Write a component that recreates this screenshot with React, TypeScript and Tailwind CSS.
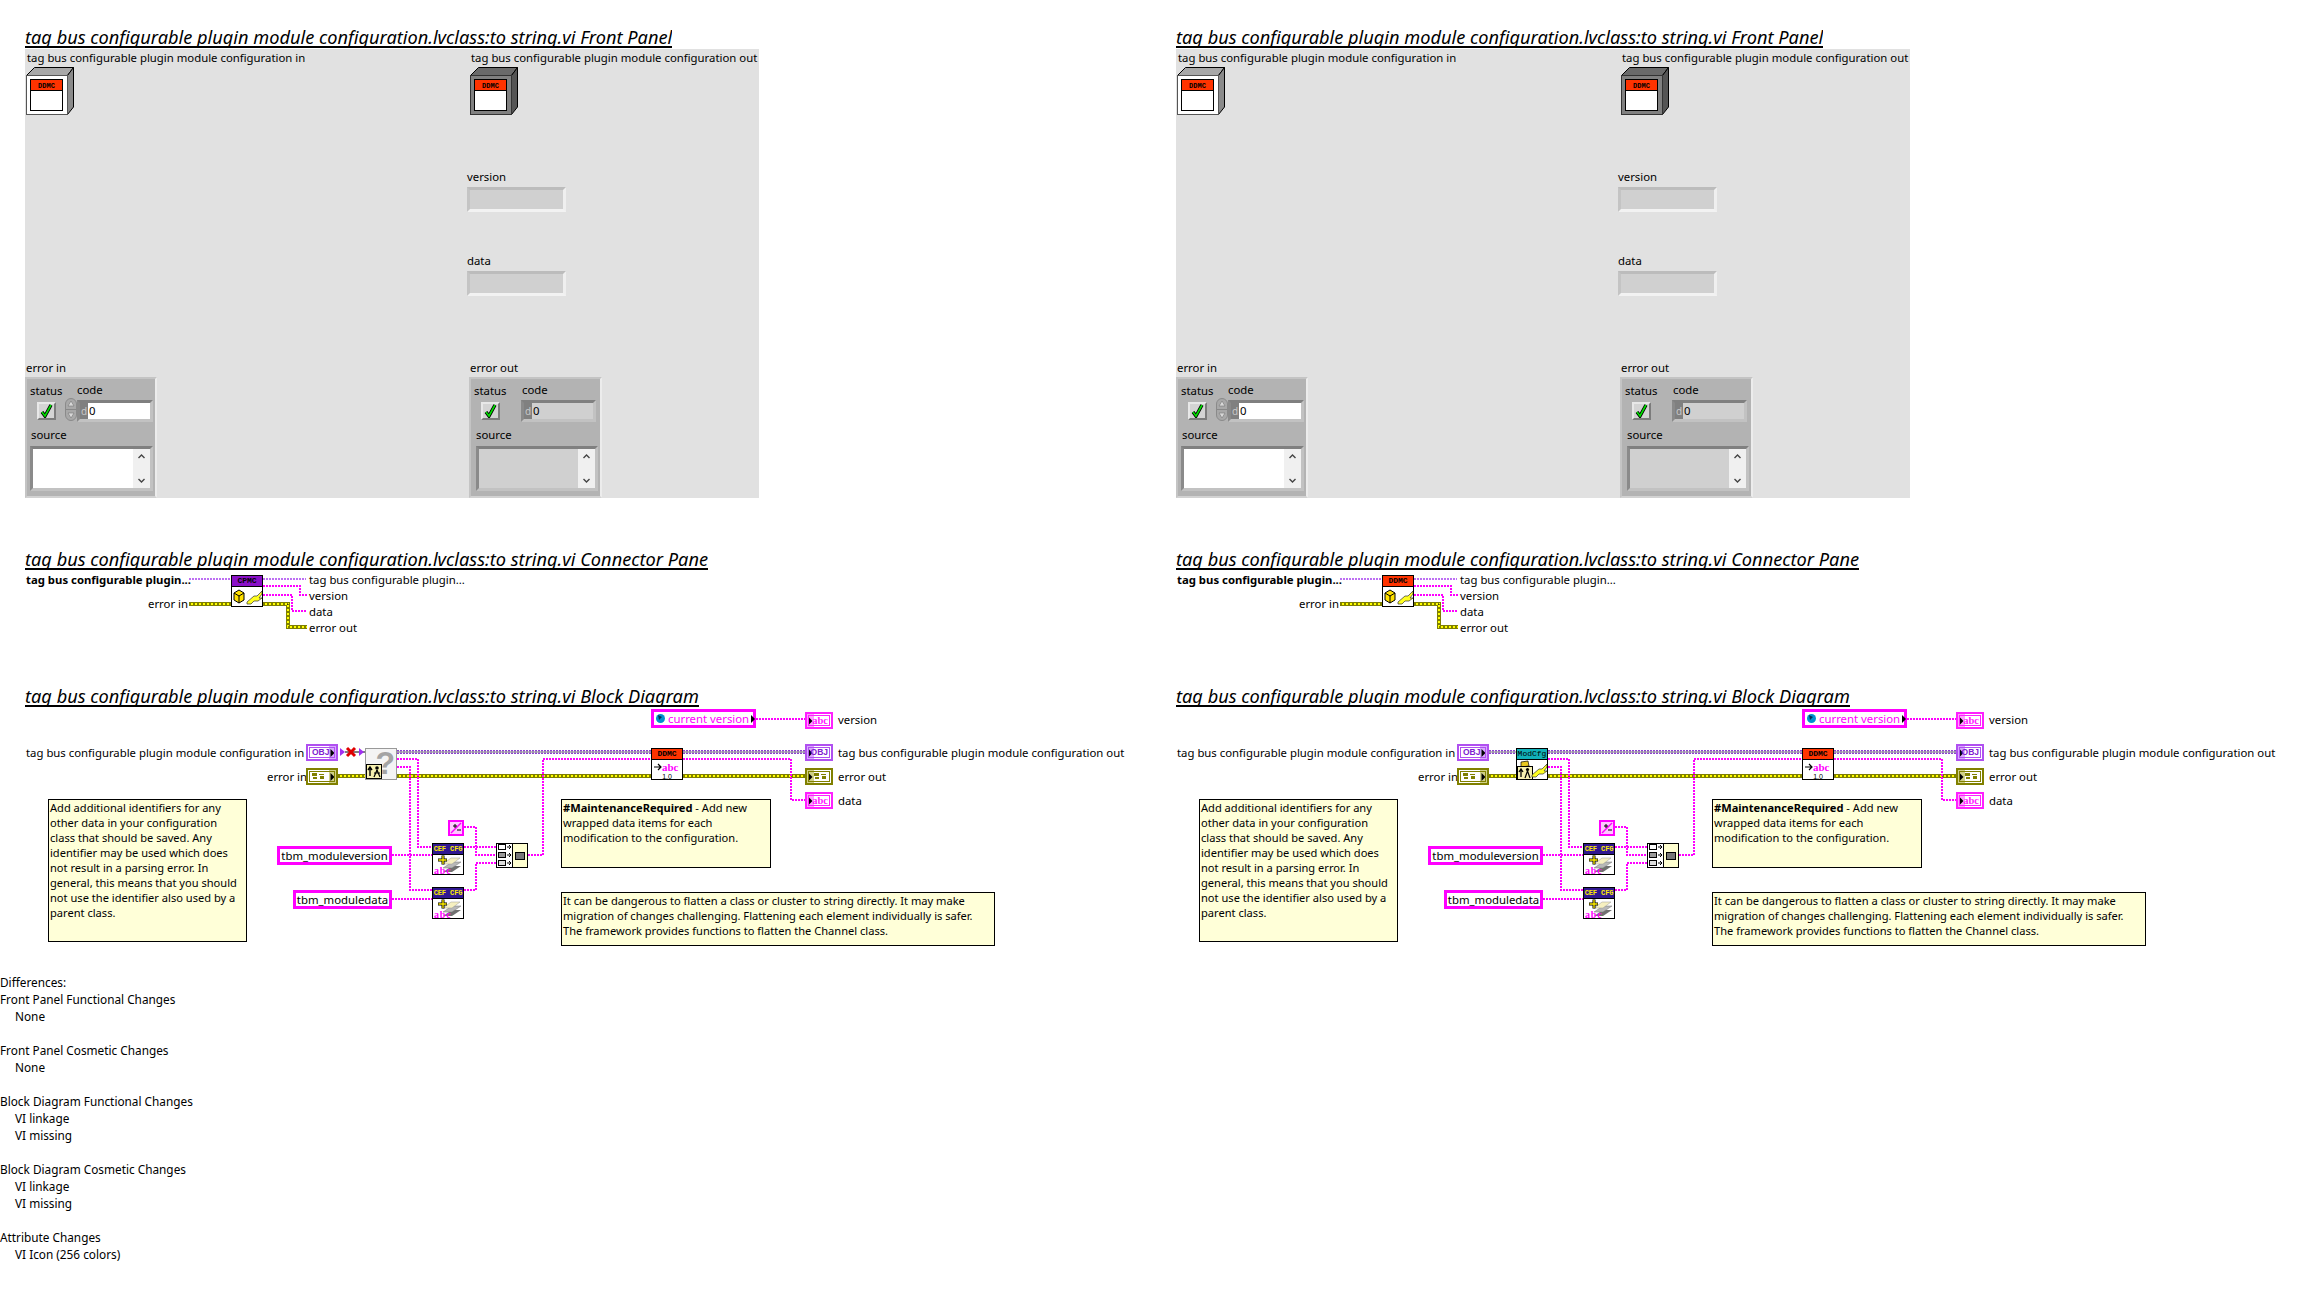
import type { ReactNode } from "react";

type Variant = "old" | "new";

function Title({ children, className = "" }: { children: ReactNode; className?: string }) {
  return (
    <h2 className={`ml-[25px] w-fit h-[24px] overflow-hidden border-b-2 border-black text-[18.2px] leading-[26px] italic font-normal text-black whitespace-nowrap ${className}`}>
      {children}
    </h2>
  );
}

function Label({ className = "", children }: { className?: string; children: ReactNode }) {
  return <span className={`absolute text-[11.35px] leading-[14px] text-black whitespace-nowrap ${className}`}>{children}</span>;
}

function Caption({ className = "", children }: { className?: string; children: ReactNode }) {
  return <span className={`block text-[11.35px] leading-[14px] text-black whitespace-nowrap ${className}`}>{children}</span>;
}

function ClassCube({ indicator, className }: { indicator?: boolean; className: string }) {
  return (
    <svg className={`absolute ${className}`} width="48" height="48" viewBox="0 0 48 48">
      <polygon points="0.5,8.5 8.5,0.5 47.5,0.5 41.5,8.5" fill={indicator ? "#6a6a6a" : "#a8a8a8"} stroke="#000" />
      <polygon points="41.5,8.5 47.5,0.5 47.5,40 41.5,47.5" fill={indicator ? "#555" : "#8a8a8a"} stroke="#000" />
      <rect x="0.5" y="8.5" width="41" height="39" fill={indicator ? "#808080" : "#fff"} stroke={indicator ? "#333" : "#555"} />
      <rect x="4.5" y="12.5" width="32" height="31" fill="#fff" stroke="#000" />
      <rect x="5" y="13" width="31" height="10" fill="#ff3300" />
      <line x1="5" y1="23.5" x2="36" y2="23.5" stroke="#000" />
      <text x="20.5" y="21" textAnchor="middle" fontSize="7" fontWeight="700" fontFamily="'Liberation Mono', monospace" fill="#000">DDMC</text>
    </svg>
  );
}

function ReadoutBox({ className }: { className: string }) {
  return <div className={`absolute w-[99px] h-[25px] bg-[#d0d0d0] border-[3px] border-t-[#bcbcbc] border-l-[#c4c4c4] border-r-[#efefef] border-b-[#f2f2f2] ${className}`} />;
}

function ErrorCheck() {
  return (
    <div className="ml-[7px] mt-[4px] w-[19px] h-[18px] bg-[#d4d4d4] border-2 border-t-[#e8e8e8] border-l-[#e8e8e8] border-r-[#7c7c7c] border-b-[#7c7c7c]">
      <svg width="15" height="14" viewBox="0 0 15 14">
        <path d="M3 8 L6 12 L12 1" fill="none" stroke="#000" strokeWidth="3.4" />
        <path d="M3 8 L6 12 L12 1" fill="none" stroke="#00e000" strokeWidth="1.6" />
      </svg>
    </div>
  );
}

function ScrollArrows() {
  return (
    <div className="ml-auto h-full w-[17px] bg-[#f0f0f0] flex flex-col items-center justify-between py-[5px]">
      <svg width="7" height="5" viewBox="0 0 7 5"><path d="M0.5 4 L3.5 1 L6.5 4" fill="none" stroke="#444" strokeWidth="1.4" /></svg>
      <svg width="7" height="5" viewBox="0 0 7 5"><path d="M0.5 1 L3.5 4 L6.5 1" fill="none" stroke="#444" strokeWidth="1.4" /></svg>
    </div>
  );
}

function ErrorCluster({ indicator }: { indicator?: boolean }) {
  return (
    <div className={`absolute top-[328px] h-[121px] pt-[4px] pl-[3px] bg-[#b3b3b3] border-2 border-t-[#c4c4c4] border-l-[#c4c4c4] border-r-[#ececec] border-b-[#d2d2d2] ${indicator ? "left-[444px] w-[133px]" : "left-0 w-[132px]"}`}>
      <div className="flex h-[41px]">
        <div className="w-[35px]">
          <Caption className="mt-px">status</Caption>
          <ErrorCheck />
        </div>
        <div className="w-[12px] pt-[15px]">
          {!indicator && (
            <svg className="block" width="12" height="23" viewBox="0 0 12 23">
              <rect x="0.5" y="0.5" width="11" height="22" rx="5.5" fill="#a8a8a8" stroke="#8a8a8a" />
              <path d="M6 3 L9 8 L3 8 Z" fill="#d8d8d8" stroke="#777" strokeWidth="0.6" />
              <path d="M6 20 L9 15 L3 15 Z" fill="#d8d8d8" stroke="#777" strokeWidth="0.6" />
              <line x1="1" y1="11.5" x2="11" y2="11.5" stroke="#888" />
            </svg>
          )}
        </div>
        <div>
          <Caption className={indicator ? "pl-px" : ""}>code</Caption>
          <div className={`mt-[3px] h-[22px] border-[3px] border-t-[#808080] border-l-[#8a8a8a] border-r-[#c2c2c2] border-b-[#c2c2c2] flex ${indicator ? "w-[75px] bg-[#d0d0d0]" : "w-[76px] bg-white"}`}>
            <span className="w-[8px] bg-[#808080] text-[10px] leading-[16px] text-[#c8c8c8] text-center shrink-0">d</span>
            <span className="text-[11.35px] leading-[16px] text-black pl-px">0</span>
          </div>
        </div>
      </div>
      <Caption className={`mt-[4px] ${indicator ? "pl-[2px]" : "pl-px"}`}>source</Caption>
      <div className={`mt-[4px] h-[45px] border-[3px] border-t-[#808080] border-l-[#8a8a8a] border-r-[#c2c2c2] border-b-[#c2c2c2] ${indicator ? "ml-[2px] w-[122px] bg-[#d0d0d0]" : "w-[123px] bg-white"}`}>
        <ScrollArrows />
      </div>
    </div>
  );
}

function FrontPanel() {
  return (
    <div className="relative ml-[25px] mt-px w-[734px] h-[449px] bg-[#e1e1e1]">
      <Label className="left-[2px] top-[2px]">tag bus configurable plugin module configuration in</Label>
      <ClassCube className="left-px top-[18px]" />
      <Label className="left-[446px] top-[2px]">tag bus configurable plugin module configuration out</Label>
      <ClassCube indicator className="left-[445px] top-[18px]" />
      <Label className="left-[442px] top-[121px]">version</Label>
      <ReadoutBox className="left-[442px] top-[138px]" />
      <Label className="left-[442px] top-[205px]">data</Label>
      <ReadoutBox className="left-[442px] top-[222px]" />
      <Label className="left-px top-[312px]">error in</Label>
      <ErrorCluster />
      <Label className="left-[445px] top-[312px]">error out</Label>
      <ErrorCluster indicator />
    </div>
  );
}

// wires, drawn over the canvas of a diagram
function StringWire({ points }: { points: string }) {
  return <polyline points={points} fill="none" stroke="#ff00ff" strokeWidth="2" strokeDasharray="2 1" />;
}

function ClassWire({ points, thin }: { points: string; thin?: boolean }) {
  if (thin) return <polyline points={points} fill="none" stroke="#a840f0" strokeWidth="1.5" strokeDasharray="2 1" />;
  return (
    <g fill="none">
      <polyline points={points} stroke="#8a40d0" strokeWidth="4" strokeDasharray="2 1" />
      <polyline points={points} stroke="#a8a8a8" strokeWidth="1.5" />
    </g>
  );
}

function ErrorWire({ points }: { points: string }) {
  return (
    <g fill="none">
      <polyline points={points} stroke="#7f7f00" strokeWidth="4" />
      <polyline points={points} stroke="#ffff00" strokeWidth="2" />
      <polyline points={points} stroke="#000" strokeWidth="1" strokeDasharray="2 2" />
    </g>
  );
}

function Wires({ children }: { children: ReactNode }) {
  return (
    <svg className="absolute left-0 top-0 pointer-events-none" width="1151" height="267">
      {children}
    </svg>
  );
}

function Node({ header, headerClass, className, children }: { header: string; headerClass: string; className: string; children: ReactNode }) {
  return (
    <div className={`absolute w-[32px] h-[32px] border border-black bg-white ${className}`}>
      <div className={`h-[10px] border-b border-black box-content text-center leading-[10px] whitespace-nowrap [font-family:'Liberation_Mono',monospace] ${headerClass}`}>
        {header}
      </div>
      {children}
    </div>
  );
}

function Wrench() {
  return <polygon points="15,15 22,9 25,9 30,4 30,7 27,11 30,11 26,14 22,14 19,17 15,17" fill="#ffff20" stroke="#333" strokeWidth="0.7" />;
}

function ConnectorIcon({ variant }: { variant: Variant }) {
  return (
    <Node
      header={variant === "old" ? "CPMC" : "DDMC"}
      headerClass={variant === "old" ? "bg-[#8a10c8] text-black text-[8px] font-bold" : "bg-[#ff3300] text-black text-[8px] font-bold"}
      className="left-[231px] top-[5px]"
    >
      <svg width="30" height="20" viewBox="0 0 30 20">
        <polygon points="2,6 7,3 12,6 12,13 7,16 2,13" fill="#ffe000" stroke="#000" />
        <path d="M2 6 L7 9 L12 6 M7 9 L7 16" fill="none" stroke="#000" />
        <Wrench />
      </svg>
    </Node>
  );
}

function ConnectorPane({ variant }: { variant: Variant }) {
  return (
    <div className="relative h-[113px]">
      <Wires>
        <ClassWire thin points="189,9 231,9" />
        <ClassWire thin points="263,9 306,9" />
        <StringWire points="263,16 300,16 300,25 307,25" />
        <StringWire points="263,25 292,25 292,41 307,41" />
        <ErrorWire points="189,34 231,34" />
        <ErrorWire points="263,34 288,34 288,57 307,57" />
      </Wires>
      <Label className="left-[26px] top-[3px] font-bold">tag bus configurable plugin...</Label>
      <Label className="left-[148px] top-[27px]">error in</Label>
      <ConnectorIcon variant={variant} />
      <Label className="left-[309px] top-[3px]">tag bus configurable plugin...</Label>
      <Label className="left-[309px] top-[19px]">version</Label>
      <Label className="left-[309px] top-[35px]">data</Label>
      <Label className="left-[309px] top-[51px]">error out</Label>
    </div>
  );
}

function Terminal({ kind, dir, className }: { kind: "abc" | "OBJ" | "err"; dir: "in" | "out"; className: string }) {
  const frame = kind === "abc" ? "border-[#ff20ff]" : kind === "OBJ" ? "border-[#b050f0]" : "border-[#808000]";
  const inner =
    kind === "abc"
      ? "border-[#ff20ff] text-[#ff20ff] [font-family:'Liberation_Serif',serif] text-[10.5px]"
      : kind === "OBJ"
        ? "border-[#b050f0] text-[#8020d0] [font-family:'Liberation_Sans',sans-serif] text-[8.5px]"
        : "border-[#808000]";
  const shade = kind === "abc" ? "bg-[#ffa0ff]" : kind === "OBJ" ? "bg-[#d8a8ff]" : "bg-[#d0d088]";
  return (
    <div className={`absolute h-[17px] border-2 bg-white ${frame} ${dir === "in" ? "w-[32px]" : "w-[28px]"} ${className}`}>
      <div className={`absolute top-0 bottom-0 w-[7px] ${shade} ${dir === "in" ? "right-0" : "left-0"} flex items-center justify-center`}>
        <svg width="5" height="8" viewBox="0 0 5 8"><path d="M0.5 0 L4.5 4 L0.5 8 Z" fill="#000" /></svg>
      </div>
      <div className={`relative m-px h-[11px] border flex items-center font-bold leading-[9px] ${dir === "in" ? "justify-start pl-[2px]" : "justify-end pr-px"} ${inner}`}>
        {kind === "err" ? (
          <svg width="14" height="7" viewBox="0 0 14 7">
            <rect x="0" y="0" width="5" height="3" fill="#808000" />
            <rect x="7" y="1" width="5" height="1" fill="#808000" />
            <rect x="1" y="4" width="4" height="2" fill="#808000" />
            <rect x="8" y="3" width="4" height="3" fill="#808000" />
          </svg>
        ) : (
          kind
        )}
      </div>
    </div>
  );
}

function StringConstant({ className, children }: { className: string; children: ReactNode }) {
  return (
    <div className={`absolute h-[19px] border-[3px] border-[#ff00ff] bg-white text-[11.35px] leading-[13px] text-black text-center whitespace-nowrap ${className}`}>
      {children}
    </div>
  );
}

function CfgIcon({ className }: { className: string }) {
  return (
    <Node header="CEF CFG" headerClass="bg-[#301890] text-[#ffee00] text-[7px] font-bold tracking-[-0.1px]" className={className}>
      <svg width="30" height="20" viewBox="0 0 30 20">
        <polygon points="10,17 19,17 28,11 19,11" fill="#707070" />
        <polygon points="10,13 19,13 28,7 19,7" fill="#b8b8b8" stroke="#777" strokeWidth="0.5" />
        <polygon points="10,9 19,9 27,3 18,3" fill="#f6f0c0" stroke="#999" strokeWidth="0.5" />
        <path d="M5 5 L14 5 M10 0.5 L10 9.5" stroke="#000" strokeWidth="3" />
        <path d="M5.5 5 L13.5 5 M10 1 L10 9" stroke="#ffee00" strokeWidth="1.3" />
        <text x="1" y="19" fontSize="10" fontWeight="700" fontFamily="'Liberation Serif', serif" fill="#ff00ff" letterSpacing="0.8">abc</text>
      </svg>
    </Node>
  );
}

function PersonGlyph() {
  return (
    <svg className="block" width="16" height="15" viewBox="0 0 16 15">
      <rect x="0.5" y="0.5" width="15" height="14" fill="#f6f0b0" stroke="#000" />
      <path d="M4 12 L4 4 M2 6 L4 3 L6 6" fill="none" stroke="#000" strokeWidth="1.4" />
      <circle cx="11" cy="4" r="1.8" fill="#000" />
      <path d="M11 6 L8 13 M11 6 L14 13 M8 9 L14 9" stroke="#000" strokeWidth="1.2" />
    </svg>
  );
}

function UnknownNode() {
  return (
    <div className="absolute left-[365px] top-[41px] w-[32px] h-[32px] border border-[#999] bg-[#f4f4f4]">
      <span className="absolute right-[1px] top-[-3px] text-[32px] leading-[34px] font-bold text-[#a4a4a4] [font-family:'Liberation_Sans',sans-serif]">?</span>
      <div className="absolute left-0 bottom-0"><PersonGlyph /></div>
    </div>
  );
}

function ModCfgNode() {
  return (
    <Node header="ModCfg" headerClass="bg-[#10b0b8] text-black text-[8px]" className="left-[365px] top-[41px]">
      <svg width="30" height="20" viewBox="0 0 30 20">
        <polygon points="4,2 11,1 12,6 4,7" fill="#e8c820" stroke="#000" strokeWidth="0.7" />
        <rect x="0.5" y="6.5" width="15" height="13" fill="#f6f0b0" stroke="#000" />
        <path d="M4 17 L4 10 M2 12 L4 9 L6 12" fill="none" stroke="#000" strokeWidth="1.3" />
        <circle cx="10.5" cy="9.5" r="1.6" fill="#000" />
        <path d="M10.5 11 L8 18 M10.5 11 L13 18" stroke="#000" strokeWidth="1.2" />
        <Wrench />
      </svg>
    </Node>
  );
}

function Note({ className, children }: { className: string; children: ReactNode }) {
  return (
    <div className={`absolute border border-black bg-[#ffffd8] pl-px text-[11.1px] leading-[15px] text-black whitespace-nowrap ${className}`}>
      {children}
    </div>
  );
}

function BlockDiagram({ variant }: { variant: Variant }) {
  return (
    <div className="relative h-[267px]">
      <Wires>
        {variant === "old" ? (
          <g>
            <line x1="345" y1="45" x2="365" y2="45" stroke="#000" />
            <polygon points="340,41 345,45 340,49" fill="#a030f0" />
            <polygon points="359,41 364,45 359,49" fill="#a030f0" />
            <path d="M347 41 L355 49 M355 41 L347 49" stroke="#e00000" strokeWidth="3" />
          </g>
        ) : (
          <ClassWire points="338,45 365,45" />
        )}
        <ErrorWire points="338,69 365,69" />
        <ClassWire points="397,45 651,45" />
        <ClassWire points="683,45 805,45" />
        <ErrorWire points="397,69 651,69" />
        <ErrorWire points="683,69 805,69" />
        <StringWire points="397,52 418,52 418,140 432,140" />
        <StringWire points="397,60 410,60 410,183 432,183" />
        <StringWire points="392,148 432,148" />
        <StringWire points="392,192 432,192" />
        <StringWire points="464,120 476,120 476,148 496,148" />
        <StringWire points="464,140 496,140" />
        <StringWire points="464,183 476,183 476,156 496,156" />
        <StringWire points="528,148 543,148 543,52 651,52" />
        <StringWire points="683,52 791,52 791,93 805,93" />
        <StringWire points="756,12 805,12" />
      </Wires>

      <Label className="left-[26px] top-[39px]">tag bus configurable plugin module configuration in</Label>
      <Terminal kind="OBJ" dir="in" className="left-[306px] top-[37px]" />
      <Label className="left-[267px] top-[63px]">error in</Label>
      <Terminal kind="err" dir="in" className="left-[306px] top-[61px]" />
      {variant === "old" ? <UnknownNode /> : <ModCfgNode />}

      <div className="absolute left-[651px] top-[2px] w-[105px] h-[19px] border-[3px] border-[#ff00ff] bg-white flex items-center text-[11.35px] leading-[13px] text-[#ff00ff] whitespace-nowrap">
        <svg className="ml-[2px] mr-[3px] shrink-0" width="9" height="9" viewBox="0 0 9 9">
          <circle cx="4.5" cy="4.5" r="4.5" fill="#0090d0" />
          <path d="M2 1 L6 3 L3 6 Z" fill="#003050" />
        </svg>
        current version
        <svg className="ml-[2px] shrink-0" width="5" height="8" viewBox="0 0 5 8"><path d="M0 0 L4 4 L0 8 Z" fill="#000" /></svg>
      </div>

      <Node header="DDMC" headerClass="bg-[#ff3300] text-black text-[8px] font-bold" className="left-[651px] top-[41px]">
        <svg width="30" height="20" viewBox="0 0 30 20">
          <path d="M2 7 L9 7 M6 4 L9 7 L6 10" fill="none" stroke="#000" strokeWidth="1.2" />
          <text x="10" y="11" fontSize="11" fontWeight="700" fontFamily="'Liberation Serif', serif" fill="#ff00ff">abc</text>
          <text x="15" y="19" textAnchor="middle" fontSize="7" fontFamily="'Liberation Sans', sans-serif" fill="#000">1.0</text>
        </svg>
      </Node>

      <Terminal kind="abc" dir="out" className="left-[805px] top-[5px]" />
      <Label className="left-[838px] top-[6px]">version</Label>
      <Terminal kind="OBJ" dir="out" className="left-[805px] top-[37px]" />
      <Label className="left-[838px] top-[39px]">tag bus configurable plugin module configuration out</Label>
      <Terminal kind="err" dir="out" className="left-[805px] top-[61px]" />
      <Label className="left-[838px] top-[63px]">error out</Label>
      <Terminal kind="abc" dir="out" className="left-[805px] top-[85px]" />
      <Label className="left-[838px] top-[87px]">data</Label>

      <StringConstant className="left-[277px] top-[139px] w-[115px]">tbm_moduleversion</StringConstant>
      <StringConstant className="left-[293px] top-[183px] w-[99px]">tbm_moduledata</StringConstant>
      <CfgIcon className="left-[432px] top-[136px]" />
      <CfgIcon className="left-[432px] top-[180px]" />

      <div className="absolute left-[448px] top-[113px] w-[16px] h-[16px] border-2 border-[#ff00ff] bg-[#ffc8ff]">
        <svg className="block" width="12" height="12" viewBox="0 0 12 12">
          <path d="M1 11 L11 1" stroke="#ff00ff" strokeWidth="1.5" />
          <path d="M3 4 L7 4 M5 2 L5 6 M7 8 L11 8" stroke="#000" />
        </svg>
      </div>

      <div className="absolute left-[496px] top-[136px] w-[32px] h-[25px] border border-black flex">
        <div className="w-[16px] bg-white border-r border-black flex flex-col justify-around items-center">
          <svg width="14" height="7" viewBox="0 0 14 7"><rect x="0.5" y="0.5" width="7" height="5" fill="#fff" stroke="#000" /><path d="M9 3 L13 3 M11 1 L13 3 L11 5" fill="none" stroke="#000" /></svg>
          <svg width="14" height="7" viewBox="0 0 14 7"><rect x="0.5" y="0.5" width="7" height="5" fill="#999" stroke="#000" /><path d="M9 3 L13 3 M11 1 L13 3 L11 5" fill="none" stroke="#000" /></svg>
          <svg width="14" height="7" viewBox="0 0 14 7"><rect x="0.5" y="0.5" width="7" height="5" fill="#ddd" stroke="#000" /><path d="M9 3 L13 3 M11 1 L13 3 L11 5" fill="none" stroke="#000" /></svg>
        </div>
        <div className="flex-1 bg-[#ffffd0] flex items-center justify-center">
          <div className="w-[10px] h-[8px] border border-black bg-[#777]" />
        </div>
      </div>

      <Note className="left-[48px] top-[92px] w-[199px] h-[143px]">
        Add additional identifiers for any<br />
        other data in your configuration<br />
        class that should be saved. Any<br />
        identifier may be used which does<br />
        not result in a parsing error. In<br />
        general, this means that you should<br />
        not use the identifier also used by a<br />
        parent class.
      </Note>
      <Note className="left-[561px] top-[92px] w-[210px] h-[69px]">
        <b>#MaintenanceRequired</b> - Add new<br />
        wrapped data items for each<br />
        modification to the configuration.
      </Note>
      <Note className="left-[561px] top-[185px] w-[434px] h-[54px]">
        It can be dangerous to flatten a class or cluster to string directly. It may make<br />
        migration of changes challenging. Flattening each element individually is safer.<br />
        The framework provides functions to flatten the Channel class.
      </Note>
    </div>
  );
}

function ViColumn({ variant }: { variant: Variant }) {
  const name = "tag bus configurable plugin module configuration.lvclass:to string.vi";
  return (
    <section>
      <Title className="mt-[24px]">{name} Front Panel</Title>
      <FrontPanel />
      <Title className="mt-[48px]">{name} Connector Pane</Title>
      <ConnectorPane variant={variant} />
      <Title>{name} Block Diagram</Title>
      <BlockDiagram variant={variant} />
    </section>
  );
}

const differences = [
  { heading: "Front Panel Functional Changes", items: ["None"] },
  { heading: "Front Panel Cosmetic Changes", items: ["None"] },
  { heading: "Block Diagram Functional Changes", items: ["VI linkage", "VI missing"] },
  { heading: "Block Diagram Cosmetic Changes", items: ["VI linkage", "VI missing"] },
  { heading: "Attribute Changes", items: ["VI Icon (256 colors)"] },
];

export default function App() {
  return (
    <div className="w-[2302px] h-[1297px] bg-white overflow-hidden [font-family:'Noto_Sans',sans-serif]">
      <div className="grid grid-cols-[1151px_1151px]">
        <ViColumn variant="old" />
        <ViColumn variant="new" />
      </div>
      <div className="text-[11.8px] leading-[17px] text-black">
        <p>Differences:</p>
        {differences.map((d) => (
          <div key={d.heading} className="mb-[17px]">
            <p>{d.heading}</p>
            {d.items.map((item) => (
              <p key={item} className="pl-[15px]">{item}</p>
            ))}
          </div>
        ))}
      </div>
    </div>
  );
}
